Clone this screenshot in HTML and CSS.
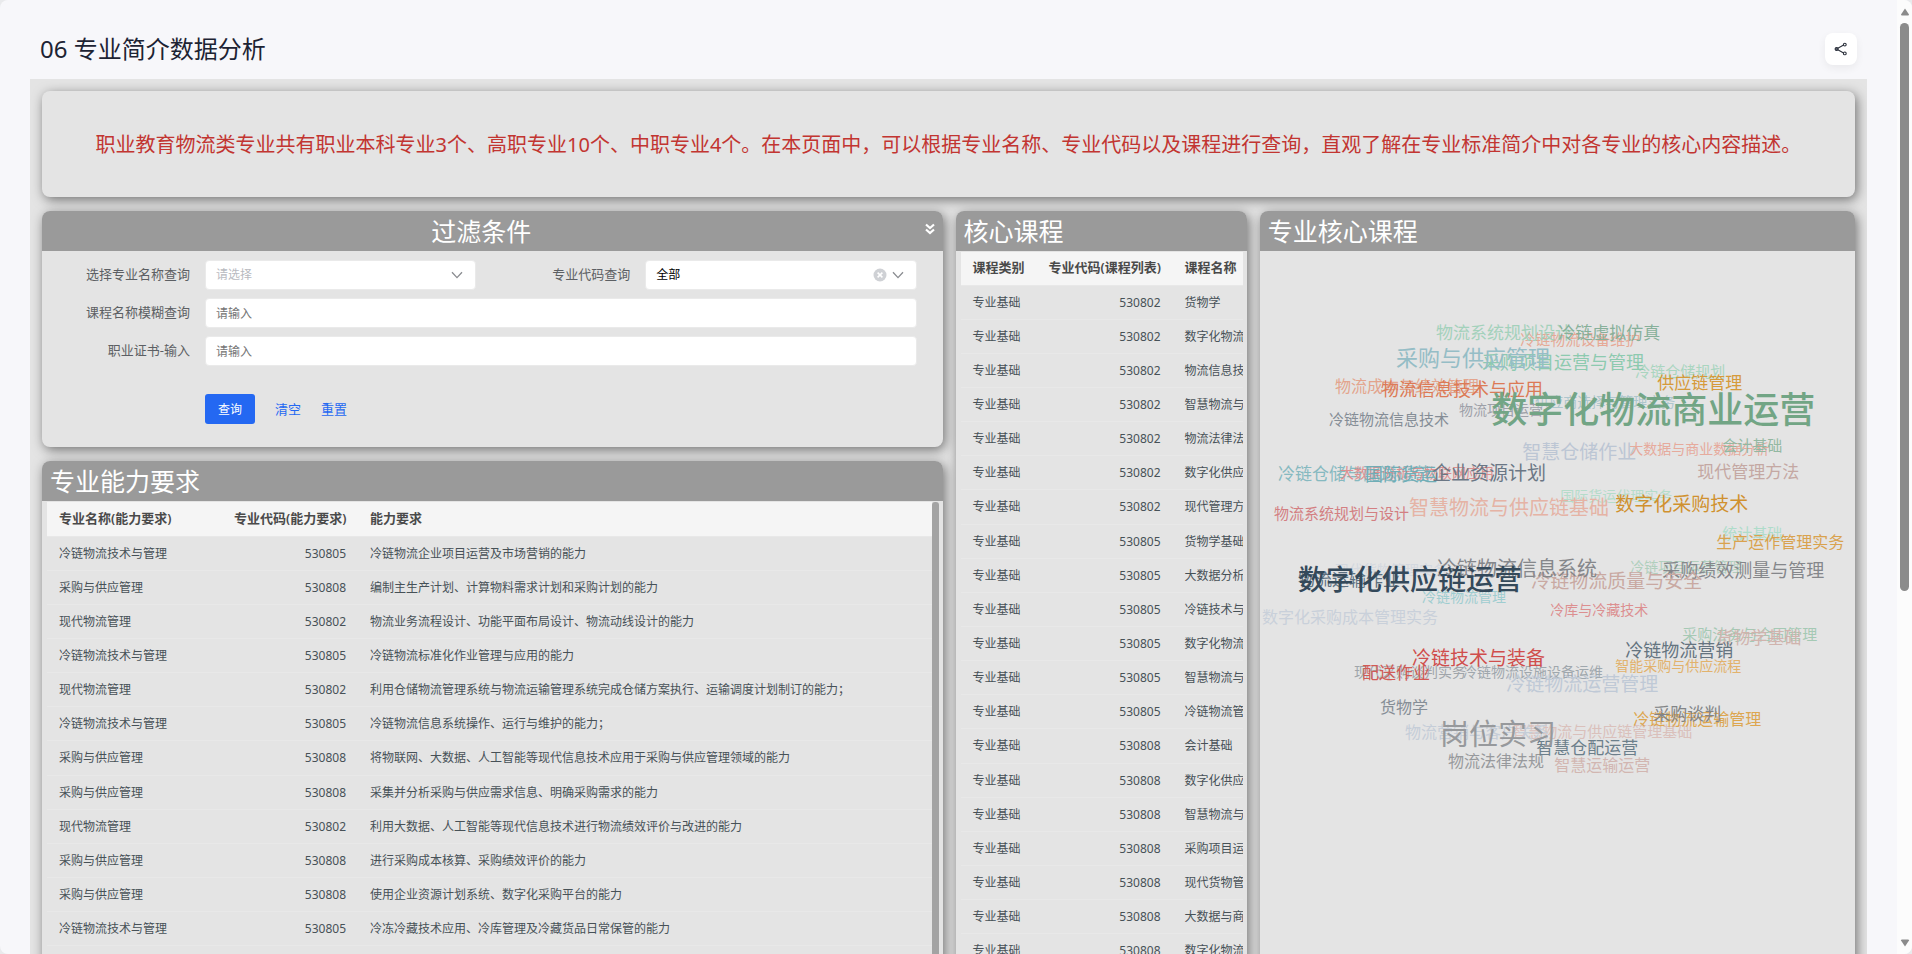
FILE: index.html
```html
<!DOCTYPE html>
<html lang="zh-CN">
<head>
<meta charset="utf-8">
<title>06 专业简介数据分析</title>
<link rel="stylesheet" href="styles.css">
</head>
<body>
<div class="window">
<main class="page">
  <header class="page-head">
    <h1 class="page-title">06 专业简介数据分析</h1>
    <button class="share" type="button" aria-label="分享">
      <svg width="14" height="14" viewBox="0 0 14 14" fill="none" stroke="#2b303b" stroke-width="1.1"><path d="M3.4 6.4 9.6 3M3.4 7.6 9.6 11"/><circle cx="2.6" cy="7" r="1.5" fill="#5a606c"/><circle cx="10.8" cy="2.6" r="1.4"/><circle cx="10.8" cy="11.4" r="1.4"/></svg>
    </button>
  </header>
  <div class="board">
    <section class="card notice"><p>职业教育物流类专业共有职业本科专业3个、高职专业10个、中职专业4个。在本页面中，可以根据专业名称、专业代码以及课程进行查询，直观了解在专业标准简介中对各专业的核心内容描述。</p></section>
    <div class="columns">
      <div class="stack">
        <section class="card filter">
          <header class="card-head filter-head">
            <h2>过滤条件</h2>
            <button class="fold" type="button" aria-label="收起">
              <svg width="10" height="12" viewBox="0 0 10 12" fill="none" stroke="#fff" stroke-width="2.2"><path d="M1 1.5 5 5 9 1.5M1 6.5 5 10 9 6.5"/></svg>
            </button>
          </header>
          <form class="form">
            <div class="row two">
              <div class="field">
                <label for="major">选择专业名称查询</label>
                <div class="control">
                  <select id="major" class="empty"><option>请选择</option></select>
                  <svg class="chevron" width="12" height="8" viewBox="0 0 12 8" fill="none" stroke="#8a8c90" stroke-width="1.3"><path d="M1 1.2 6 6.6 11 1.2"/></svg>
                </div>
              </div>
              <div class="field">
                <label for="code">专业代码查询</label>
                <div class="control">
                  <select id="code"><option>全部</option></select>
                  <button class="clear" type="button" aria-label="清除"><svg width="14" height="14" viewBox="0 0 14 14"><circle cx="7" cy="7" r="6.5" fill="#cfd1d5"/><path d="M4.6 4.6 9.4 9.4M9.4 4.6 4.6 9.4" stroke="#fff" stroke-width="1.5"/></svg></button>
                  <svg class="chevron" width="12" height="8" viewBox="0 0 12 8" fill="none" stroke="#8a8c90" stroke-width="1.3"><path d="M1 1.2 6 6.6 11 1.2"/></svg>
                </div>
              </div>
            </div>
            <div class="row field"><label for="course">课程名称模糊查询</label><div class="control"><input id="course" type="text" placeholder="请输入"></div></div>
            <div class="row field"><label for="cert">职业证书-输入</label><div class="control"><input id="cert" type="text" placeholder="请输入"></div></div>
            <div class="actions">
              <button class="primary" type="button">查询</button>
              <button class="link" type="button">清空</button>
              <button class="link" type="button">重置</button>
            </div>
          </form>
        </section>
        <section class="card ability">
          <header class="card-head"><h2>专业能力要求</h2></header>
          <div class="table-wrap">
            <table class="ability-table">
              <colgroup><col class="c-major"><col class="c-code"><col></colgroup>
              <thead><tr><th>专业名称(能力要求)</th><th class="num">专业代码(能力要求)</th><th>能力要求</th></tr></thead>
              <tbody>
                <tr><td>冷链物流技术与管理</td><td class="num">530805</td><td>冷链物流企业项目运营及市场营销的能力</td></tr>
                <tr><td>采购与供应管理</td><td class="num">530808</td><td>编制主生产计划、计算物料需求计划和采购计划的能力</td></tr>
                <tr><td>现代物流管理</td><td class="num">530802</td><td>物流业务流程设计、功能平面布局设计、物流动线设计的能力</td></tr>
                <tr><td>冷链物流技术与管理</td><td class="num">530805</td><td>冷链物流标准化作业管理与应用的能力</td></tr>
                <tr><td>现代物流管理</td><td class="num">530802</td><td>利用仓储物流管理系统与物流运输管理系统完成仓储方案执行、运输调度计划制订的能力；</td></tr>
                <tr><td>冷链物流技术与管理</td><td class="num">530805</td><td>冷链物流信息系统操作、运行与维护的能力；</td></tr>
                <tr><td>采购与供应管理</td><td class="num">530808</td><td>将物联网、大数据、人工智能等现代信息技术应用于采购与供应管理领域的能力</td></tr>
                <tr><td>采购与供应管理</td><td class="num">530808</td><td>采集并分析采购与供应需求信息、明确采购需求的能力</td></tr>
                <tr><td>现代物流管理</td><td class="num">530802</td><td>利用大数据、人工智能等现代信息技术进行物流绩效评价与改进的能力</td></tr>
                <tr><td>采购与供应管理</td><td class="num">530808</td><td>进行采购成本核算、采购绩效评价的能力</td></tr>
                <tr><td>采购与供应管理</td><td class="num">530808</td><td>使用企业资源计划系统、数字化采购平台的能力</td></tr>
                <tr><td>冷链物流技术与管理</td><td class="num">530805</td><td>冷冻冷藏技术应用、冷库管理及冷藏货品日常保管的能力</td></tr>
              </tbody>
            </table>
            <div class="inner-bar"></div>
          </div>
        </section>
      </div>
      <section class="card course">
        <header class="card-head"><h2>核心课程</h2></header>
        <div class="table-wrap course-wrap">
          <table class="course-table">
            <colgroup><col class="c-kind"><col class="c-code"><col></colgroup>
            <thead><tr><th>课程类别</th><th class="num">专业代码(课程列表)</th><th>课程名称</th></tr></thead>
            <tbody>
              <tr><td>专业基础</td><td class="num">530802</td><td>货物学</td></tr>
              <tr><td>专业基础</td><td class="num">530802</td><td>数字化物流商业运营</td></tr>
              <tr><td>专业基础</td><td class="num">530802</td><td>物流信息技术与应用</td></tr>
              <tr><td>专业基础</td><td class="num">530802</td><td>智慧物流与供应链基础</td></tr>
              <tr><td>专业基础</td><td class="num">530802</td><td>物流法律法规</td></tr>
              <tr><td>专业基础</td><td class="num">530802</td><td>数字化供应链运营</td></tr>
              <tr><td>专业基础</td><td class="num">530802</td><td>现代管理方法</td></tr>
              <tr><td>专业基础</td><td class="num">530805</td><td>货物学基础</td></tr>
              <tr><td>专业基础</td><td class="num">530805</td><td>大数据分析与物联网应用</td></tr>
              <tr><td>专业基础</td><td class="num">530805</td><td>冷链技术与装备</td></tr>
              <tr><td>专业基础</td><td class="num">530805</td><td>数字化物流商业运营</td></tr>
              <tr><td>专业基础</td><td class="num">530805</td><td>智慧物流与供应链基础</td></tr>
              <tr><td>专业基础</td><td class="num">530805</td><td>冷链物流管理</td></tr>
              <tr><td>专业基础</td><td class="num">530808</td><td>会计基础</td></tr>
              <tr><td>专业基础</td><td class="num">530808</td><td>数字化供应链运营</td></tr>
              <tr><td>专业基础</td><td class="num">530808</td><td>智慧物流与供应链基础</td></tr>
              <tr><td>专业基础</td><td class="num">530808</td><td>采购项目运营与管理</td></tr>
              <tr><td>专业基础</td><td class="num">530808</td><td>现代货物管理实务</td></tr>
              <tr><td>专业基础</td><td class="num">530808</td><td>大数据与商业数据分析</td></tr>
              <tr><td>专业基础</td><td class="num">530808</td><td>数字化物流商业运营</td></tr>
            </tbody>
          </table>
        </div>
      </section>
      <section class="card cloud">
        <header class="card-head"><h2>专业核心课程</h2></header>
        <svg class="words" viewBox="0 0 595 703" role="img" aria-label="专业核心课程词云">
          <g class="w">
            <text x="75" y="324" font-size="14" fill="#d3d8df">现代货物管理实务</text>
            <text x="300" y="250" font-size="14" fill="#b5dcca">国际货运代理实务</text>
            <text x="275" y="156" font-size="14" fill="#adc6cd">供应商选择与管理实务</text>
            <text x="369" y="203" font-size="14" fill="#e6aa9c">大数据与商业数据分析</text>
            <text x="199" y="164" font-size="14" fill="#9da0a8">物流项目运营</text>
            <text x="370" y="321" font-size="14" fill="#b0cfbd">冷链项目运营管理</text>
            <text x="162" y="351" font-size="14" fill="#9fcdd0">冷链物流管理</text>
            <text x="290" y="364" font-size="14" fill="#dc8f90">冷库与冷藏技术</text>
            <text x="94" y="426" font-size="14" fill="#a0a5aa">现代采购谈判实务</text>
            <text x="203" y="426" font-size="14" fill="#9fa7ad">冷链物流设施设备运维</text>
            <text x="355" y="420" font-size="14" fill="#e2b26c">智能采购与供应流程</text>
            <text x="252" y="486" font-size="15" fill="#dac0bb">智慧物流与供应链管理基础</text>
            <text x="260" y="94" font-size="15" fill="#e6a996">冷链物流设备维护</text>
            <text x="375" y="126" font-size="15" fill="#a9d5bf">冷链仓储规划</text>
            <text x="462" y="200" font-size="15" fill="#93b8a2">会计基础</text>
            <text x="462" y="288" font-size="15" fill="#aedcca">统计基础</text>
            <text x="69" y="174" font-size="15" fill="#858d96">冷链物流信息技术</text>
            <text x="14" y="268" font-size="15" fill="#d37f82">物流系统规划与设计</text>
            <text x="422" y="389" font-size="15" fill="#a5c9b4">采购法务与合同管理</text>
            <text x="2" y="372" font-size="16" fill="#c9d0da">数字化采购成本管理实务</text>
            <text x="75" y="141" font-size="16" fill="#e3a48d">物流成本与绩效管理</text>
            <text x="456" y="297" font-size="16" fill="#d9a24e">生产运作管理实务</text>
            <text x="120" y="462" font-size="16" fill="#868e96">货物学</text>
            <text x="145" y="487" font-size="16" fill="#c5cdd8">物流营销与客户关系</text>
            <text x="188" y="516" font-size="16" fill="#97999c">物流法律法规</text>
            <text x="294" y="520" font-size="16" fill="#d2b6b1">智慧运输运营</text>
            <text x="373" y="474" font-size="16" fill="#dda64f">冷链物流运输管理</text>
            <text x="456" y="393" font-size="17" fill="#d0b3ad">货物学基础</text>
            <text x="176" y="88" font-size="17" fill="#a3d1bb">物流系统规划设计</text>
            <text x="298" y="88" font-size="17" fill="#87b09a">冷链虚拟仿真</text>
            <text x="397" y="138" font-size="17" fill="#d69a3a">供应链管理</text>
            <text x="437" y="227" font-size="17" fill="#c4a8a3">现代管理方法</text>
            <text x="18" y="229" font-size="17" fill="#86b9c0">冷链仓储与配送运营</text>
            <text x="80" y="227" font-size="14" fill="#dc8f90">大数据分析与物联网应用</text>
            <text x="105" y="230" font-size="18" fill="#6fadb6">国际货运</text>
            <text x="102" y="428" font-size="17" fill="#d25a55">配送作业</text>
            <text x="276" y="503" font-size="17" fill="#6c7f8b">智慧仓配运营</text>
            <text x="393" y="469" font-size="17" fill="#828487">采购谈判</text>
            <text x="38" y="335" font-size="17" fill="#5d7080">物流运输作业</text>
            <text x="222" y="118" font-size="18" fill="#8dcaaf">采购项目运营与管理</text>
            <text x="121" y="145" font-size="18" fill="#dc7a56">物流信息技术与应用</text>
            <text x="402" y="326" font-size="18" fill="#85878b">采购绩效测量与管理</text>
            <text x="365" y="406" font-size="18" fill="#657480">冷链物流营销</text>
            <text x="262" y="208" font-size="19" fill="#bcc6d4">智慧仓储作业</text>
            <text x="172" y="229" font-size="19" fill="#6b7785">企业资源计划</text>
            <text x="355" y="260" font-size="19" fill="#d0912f">数字化采购技术</text>
            <text x="271" y="337" font-size="19" fill="#c9a9a2">冷链物流质量与安全</text>
            <text x="152" y="414" font-size="19" fill="#d04e4c">冷链技术与装备</text>
            <text x="246" y="440" font-size="19" fill="#bfc9d6">冷链物流运营管理</text>
            <text x="149" y="264" font-size="20" fill="#e5b3a5">智慧物流与供应链基础</text>
            <text x="177" y="325" font-size="20" fill="#85878b">冷链物流信息系统</text>
            <text x="136" y="115" font-size="22" fill="#95bdc6">采购与供应管理</text>
            <text x="38" y="339" font-size="28" class="strong" fill="#34495a">数字化供应链运营</text>
            <text x="180" y="494" font-size="29" fill="#97999c">岗位实习</text>
            <text x="231" y="172" font-size="36" class="strong" fill="#72a585">数字化物流商业运营</text>
          </g>
        </svg>
      </section>
    </div>
  </div>
</main>
<div class="scrollbar">
  <svg width="10" height="8" viewBox="0 0 10 8"><path d="M5 .5 9 6.5Q9 7.5 8 7.5H2Q1 7.5 1 6.5Z" fill="#8b8b8b"/></svg>
  <div class="track"><div class="thumb"></div></div>
  <svg width="10" height="8" viewBox="0 0 10 8"><path d="M5 7.5 9 1.5Q9 .5 8 .5H2Q1 .5 1 1.5Z" fill="#8b8b8b"/></svg>
</div>
</div>
</body>
</html>
```
FILE: styles.css
```css
* { box-sizing: border-box; }
body {
  margin: 0;
  background: #e9eaec;
  color: #475157;
  font-family: "Noto Sans", "Noto Sans CJK SC", sans-serif;
  font-size: 12px;
}
h1, h2, p { margin: 0; font-weight: 400; }
button, input, select { font-family: inherit; font-size: 12px; margin: 0; }
button { border: 0; background: none; padding: 0; display: flex; align-items: center; justify-content: center; }
svg { display: block; }

.window { display: flex; height: 100vh; overflow: hidden; border-radius: 8px; background: #f7f7fa; }
.page { flex: 1; min-width: 0; padding: 0 30px; display: flex; flex-direction: column; }
.page-head { display: flex; align-items: center; justify-content: space-between; padding: 33px 10px 14px; }
.page-title { color: #1d2333; font-size: 24px; line-height: 32px; }
.share { width: 32px; height: 32px; border-radius: 8px; background: #fff; box-shadow: 0 3px 8px rgba(0, 0, 0, .06); }

.board { flex: 1; min-height: 0; display: flex; flex-direction: column; gap: 14px; padding: 12px 12px 0; background: #e4e4e4; overflow: hidden; }
.card { border-radius: 8px; background: #e4e4e4; box-shadow: 2px 3px 12px rgba(0, 0, 0, .5); }
.notice { flex: none; padding: 39px 20px 37px; text-align: center; color: #c23531; font-size: 20px; line-height: 30px; }
.columns { flex: none; display: grid; grid-template-columns: 900fr 291fr 595fr; gap: 14px 13px; }
.stack { display: flex; flex-direction: column; gap: 14px; min-width: 0; }
.card-head { padding: 0 8px; border-radius: 8px 8px 0 0; background: #9a9a9a; color: #fff; }
.card-head h2 { font-size: 25px; line-height: 40px; }
.filter-head { display: flex; align-items: center; }
.filter-head h2 { flex: 1; text-align: center; }
.fold { width: 22px; height: 30px; justify-content: flex-end; padding-bottom: 4px; }

.form { display: flex; flex-direction: column; gap: 8px; padding: 9px 26px 23px 20px; }
.two { display: grid; grid-template-columns: 1fr 1fr; gap: 26px; }
.field { display: flex; align-items: center; gap: 15px; }
.field label { width: 128px; flex: none; text-align: right; color: #5c5f63; font-size: 13px; line-height: 20px; padding-bottom: 2px; }
.control { position: relative; flex: 1; min-width: 0; }
.control input, .control select {
  display: block; width: 100%; height: 30px; padding: 0 10px;
  border: 1px solid #eaeaea; border-radius: 4px; background: #fff; color: #000;
  appearance: none; outline: 0;
}
.control select { padding-bottom: 2px; }
.control .empty { color: #b8babf; }
.control input::placeholder { color: #757575; }
.chevron { position: absolute; right: 13px; top: 11px; }
.clear { position: absolute; right: 30px; top: 8px; }
.actions { display: flex; align-items: center; gap: 20px; padding: 20px 0 0 143px; }
.primary { width: 50px; height: 30px; border-radius: 3px; background: #2468f2; color: #fff; }
.link { height: 30px; padding-bottom: 2px; color: #2468f2; font-size: 13px; }

.ability { flex: 1; display: flex; flex-direction: column; }
.table-wrap { display: flex; align-items: flex-start; flex: 1; padding: 1px 4px 0 5px; }
.course-wrap { overflow: hidden; }
table { flex: 1; width: 100%; min-width: 0; table-layout: fixed; border-collapse: separate; border-spacing: 0; }
th, td { height: 34px; padding: 0 0 0 12px; text-align: left; white-space: nowrap; overflow: hidden; border-bottom: 1px solid #e8e8e8; line-height: 18px; }
tbody tr:nth-child(7n) td { height: 35px; }
th { height: 35px; padding-bottom: 2px; background: #f5f5f5; color: #4a4a4a; font-size: 13px; font-weight: 600; }
.course-table th { height: 34px; padding-bottom: 3px; }
td { color: #475157; }
.num { text-align: right; padding-right: 12px; }
.c-major { width: 175px; }
.c-kind { width: 76px; }
.c-code { width: 136px; }
.inner-bar { width: 7px; align-self: stretch; background: #a3a3a3; border-radius: 3px 3px 0 0; }

.words { width: 100%; height: auto; }
.w { font-family: "Noto Sans CJK SC", sans-serif; }
.strong { font-weight: 500; }

.scrollbar { width: 15px; flex: none; display: flex; flex-direction: column; align-items: center; padding: 8px 0 7px; background: #fcfcfc; }
.track { flex: 1; width: 9px; padding: 7px 0; }
.thumb { height: 62.5%; border-radius: 5px; background: #8b8b8b; }
```
